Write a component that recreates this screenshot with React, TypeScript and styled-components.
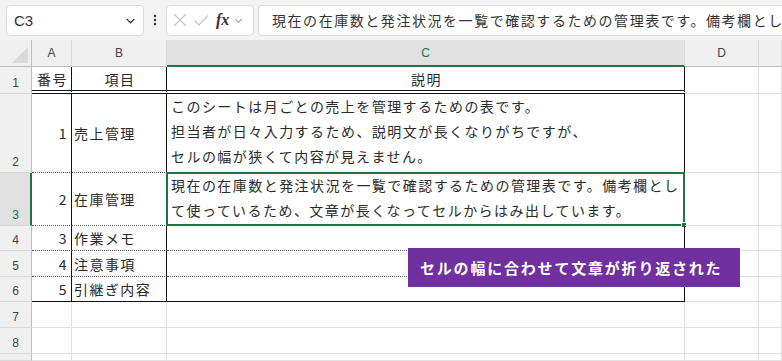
import styled, { createGlobalStyle } from "styled-components";

const GlobalStyle = createGlobalStyle`
  html, body {
    margin: 0;
    padding: 0;
    background: #ffffff;
    overflow: hidden;
  }
  * {
    box-sizing: border-box;
  }
`;

const JP = `"Noto Sans CJK JP", "Noto Sans", sans-serif`;
const GRID = "1px solid #e1e1e1";
const BLACK = "1px solid #111";
const DOTTED = "1px dotted #555";
const GREEN = "#217346";

const Page = styled.div`
  width: 782px;
  height: 361px;
  display: flex;
  flex-direction: column;
  font-family: ${JP};
`;

const Toolbar = styled.div`
  height: 40px;
  background: #f3f3f3;
  display: flex;
  align-items: center;
  padding: 0 0 0 6px;
`;

const NameBox = styled.div`
  width: 138px;
  height: 31px;
  background: #fff;
  border: 1px solid #dcdcdc;
  border-radius: 4px;
  display: flex;
  align-items: center;
  justify-content: space-between;
  padding: 0 7px;
  font-family: "Liberation Sans", Arial, sans-serif;
  font-size: 15px;
  color: #333;
`;

const Dots = styled.div`
  width: 22px;
  display: flex;
  justify-content: center;
`;

const FxBox = styled.div`
  width: 88px;
  height: 31px;
  background: #fff;
  border: 1px solid #dcdcdc;
  border-radius: 4px;
  display: flex;
  align-items: center;
  padding: 0 0 0 5px;
  gap: 5px;
`;

const FxText = styled.span`
  font-family: "Liberation Serif", "Times New Roman", serif;
  font-style: italic;
  font-weight: bold;
  font-size: 16px;
  color: #333;
  margin-left: 2px;
`;

const FormulaInput = styled.div`
  flex: 1;
  min-width: 0;
  margin-left: 4px;
  height: 31px;
  background: #fff;
  border: 1px solid #dcdcdc;
  border-right: none;
  border-radius: 4px 0 0 4px;
  display: flex;
  align-items: center;
  padding-left: 13px;
  font-size: 14px;
  letter-spacing: 1.55px;
  color: #333;
  white-space: nowrap;
  overflow: hidden;
`;

const SheetWrap = styled.div`
  position: relative;
  flex: 1;
  overflow: hidden;
`;

const Sheet = styled.div`
  display: grid;
  grid-template-columns: 32px 40px 95px 518px 74px 1fr;
  grid-template-rows: 27px 27px 79px 53px 25px 26px 25px 26px 26px 1fr;
  height: 100%;
`;

const ColHead = styled.div<{ $sel?: boolean }>`
  background: ${(p) => (p.$sel ? "#e1e1e1" : "#f0f0f0")};
  border-right: 1px solid #dadada;
  border-bottom: ${(p) => (p.$sel ? `2px solid ${GREEN}` : "1px solid #bdbdbd")};
  display: flex;
  align-items: center;
  justify-content: center;
  font-family: "Liberation Sans", Arial, sans-serif;
  font-size: 12px;
  color: ${(p) => (p.$sel ? GREEN : "#444")};
  padding-top: ${(p) => (p.$sel ? "1px" : "0")};
`;

const Corner = styled.div`
  background: #f0f0f0;
  border-right: 1px solid #bdbdbd;
  border-bottom: 1px solid #bdbdbd;
  display: flex;
  align-items: flex-end;
  justify-content: flex-end;
  padding: 0 3px 3px 0;
`;

const RowHead = styled.div<{ $sel?: boolean }>`
  background: ${(p) => (p.$sel ? "#e1e1e1" : "#f0f0f0")};
  border-right: ${(p) => (p.$sel ? `2px solid ${GREEN}` : "1px solid #bdbdbd")};
  border-bottom: 1px solid #dadada;
  display: flex;
  align-items: flex-end;
  justify-content: center;
  padding-bottom: 3px;
  padding-left: ${(p) => (p.$sel ? "1px" : "0")};
  font-family: "Liberation Sans", Arial, sans-serif;
  font-size: 12px;
  color: ${(p) => (p.$sel ? GREEN : "#444")};
`;

type Align = "left" | "center" | "right";

const Cell = styled.div<{ $right?: string; $bottom?: string; $align?: Align; $top?: boolean }>`
  position: relative;
  border-right: ${(p) => p.$right ?? GRID};
  border-bottom: ${(p) => p.$bottom ?? GRID};
  display: flex;
  flex-direction: column;
  justify-content: ${(p) => (p.$top ? "flex-start" : "center")};
  align-items: ${(p) =>
    p.$align === "right" ? "flex-end" : p.$align === "center" ? "center" : "flex-start"};
  padding: ${(p) => (p.$align === "right" ? "0 3px 0 0" : p.$top ? "0 0 0 4px" : "0 0 0 2px")};
  font-size: 14px;
  letter-spacing: 1.45px;
  color: #2b2b2b;
  white-space: nowrap;
`;

const Line = styled.div`
  height: 25px;
  line-height: 25px;
`;

const Selection = styled.div`
  position: absolute;
  left: -1px;
  top: -1px;
  right: -1px;
  bottom: -1px;
  border: 2px solid ${GREEN};
  pointer-events: none;
`;

const Handle = styled.div`
  position: absolute;
  right: -4px;
  bottom: -4px;
  width: 6px;
  height: 6px;
  background: ${GREEN};
  border: 1px solid #fff;
`;

const Callout = styled.div`
  position: absolute;
  left: 408px;
  top: 208px;
  width: 332px;
  height: 39px;
  background: #7030a0;
  color: #fff;
  font-weight: bold;
  font-size: 15px;
  letter-spacing: 1.8px;
  display: flex;
  align-items: center;
  padding-left: 12px;
  white-space: nowrap;
`;

const Chevron = ({ color = "#444", size = 10 }: { color?: string; size?: number }) => (
  <svg width={size} height={size} viewBox="0 0 10 10">
    <path d="M1.5 3.5 L5 7 L8.5 3.5" fill="none" stroke={color} strokeWidth="1.2" />
  </svg>
);

type Row = {
  n: number;
  no?: string;
  item?: string;
  desc?: string[];
  bottom: string;
  sel?: boolean;
};

const rows: Row[] = [
  {
    n: 2,
    no: "1",
    item: "売上管理",
    desc: [
      "このシートは月ごとの売上を管理するための表です。",
      "担当者が日々入力するため、説明文が長くなりがちですが、",
      "セルの幅が狭くて内容が見えません。",
    ],
    bottom: DOTTED,
  },
  {
    n: 3,
    no: "2",
    item: "在庫管理",
    desc: [
      "現在の在庫数と発注状況を一覧で確認するための管理表です。備考欄とし",
      "て使っているため、文章が長くなってセルからはみ出しています。",
    ],
    bottom: DOTTED,
    sel: true,
  },
  { n: 4, no: "3", item: "作業メモ", bottom: DOTTED },
  { n: 5, no: "4", item: "注意事項", bottom: DOTTED },
  { n: 6, no: "5", item: "引継ぎ内容", bottom: BLACK },
];

export default function App() {
  return (
    <Page>
      <GlobalStyle />
      <Toolbar>
        <NameBox>
          <span>C3</span>
          <Chevron size={11} color="#333" />
        </NameBox>
        <Dots>
          <svg width="4" height="12" viewBox="0 0 4 12">
            <circle cx="2" cy="2" r="1.2" fill="#333" />
            <circle cx="2" cy="6" r="1.2" fill="#333" />
            <circle cx="2" cy="10" r="1.2" fill="#333" />
          </svg>
        </Dots>
        <FxBox>
          <svg width="16" height="16" viewBox="0 0 16 16">
            <path d="M2 2 L14 14 M14 2 L2 14" stroke="#c4c4c4" strokeWidth="1.1" fill="none" />
          </svg>
          <svg width="16" height="16" viewBox="0 0 16 16">
            <path d="M1.5 8.5 L6 13 L15 3.5" stroke="#c4c4c4" strokeWidth="1.1" fill="none" />
          </svg>
          <FxText>fx</FxText>
          <Chevron size={9} color="#999" />
        </FxBox>
        <FormulaInput>
          現在の在庫数と発注状況を一覧で確認するための管理表です。備考欄とし
        </FormulaInput>
      </Toolbar>

      <SheetWrap>
        <Sheet>
          <Corner>
            <svg width="16" height="16" viewBox="0 0 16 16">
              <polygon points="16,0 16,16 0,16" fill="#dadada" />
            </svg>
          </Corner>
          <ColHead>A</ColHead>
          <ColHead>B</ColHead>
          <ColHead $sel>C</ColHead>
          <ColHead>D</ColHead>
          <ColHead />

          <RowHead>1</RowHead>
          <Cell $align="center" $right={BLACK} $bottom="4px double #111">
            番号
          </Cell>
          <Cell $align="center" $right={BLACK} $bottom="4px double #111">
            項目
          </Cell>
          <Cell $align="center" $right={BLACK} $bottom="4px double #111">
            説明
          </Cell>
          <Cell />
          <Cell />

          {rows.map((r) => (
            <>
              <RowHead key={`h${r.n}`} $sel={r.sel}>
                {r.n}
              </RowHead>
              <Cell key={`a${r.n}`} $align="right" $right={BLACK} $bottom={r.bottom}>
                {r.no}
              </Cell>
              <Cell key={`b${r.n}`} $right={BLACK} $bottom={r.bottom}>
                {r.item}
              </Cell>
              <Cell key={`c${r.n}`} $top $right={BLACK} $bottom={r.bottom}>
                {r.desc?.map((l) => <Line key={l}>{l}</Line>)}
                {r.sel && (
                  <Selection>
                    <Handle />
                  </Selection>
                )}
              </Cell>
              <Cell key={`d${r.n}`} />
              <Cell key={`e${r.n}`} />
            </>
          ))}

          {[7, 8, 9].map((n) => (
            <>
              <RowHead key={`h${n}`}>{n < 9 ? n : ""}</RowHead>
              <Cell key={`a${n}`} />
              <Cell key={`b${n}`} />
              <Cell key={`c${n}`} />
              <Cell key={`d${n}`} />
              <Cell key={`e${n}`} />
            </>
          ))}
        </Sheet>
        <Callout>セルの幅に合わせて文章が折り返された</Callout>
      </SheetWrap>
    </Page>
  );
}
